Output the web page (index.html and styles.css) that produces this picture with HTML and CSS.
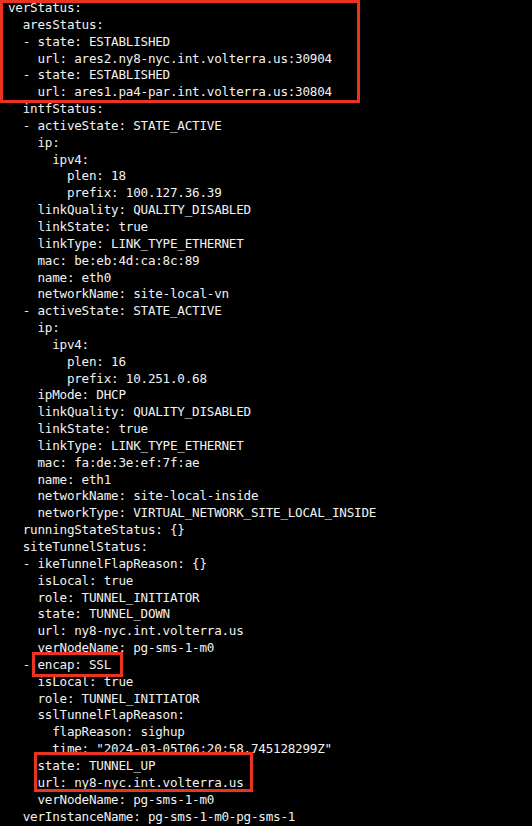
FILE: index.html
```html
<!DOCTYPE html>
<html lang="en">
<head>
<meta charset="utf-8">
<title>verStatus</title>
<link rel="stylesheet" href="styles.css">
</head>
<body>
<div class="terminal">
<pre class="yaml">verStatus:
  aresStatus:
  - state: ESTABLISHED
    url: ares2.ny8-nyc.int.volterra.us:30904
  - state: ESTABLISHED
    url: ares1.pa4-par.int.volterra.us:30804
  intfStatus:
  - activeState: STATE_ACTIVE
    ip:
      ipv4:
        plen: 18
        prefix: 100.127.36.39
    linkQuality: QUALITY_DISABLED
    linkState: true
    linkType: LINK_TYPE_ETHERNET
    mac: be:eb:4d:ca:8c:89
    name: eth0
    networkName: site-local-vn
  - activeState: STATE_ACTIVE
    ip:
      ipv4:
        plen: 16
        prefix: 10.251.0.68
    ipMode: DHCP
    linkQuality: QUALITY_DISABLED
    linkState: true
    linkType: LINK_TYPE_ETHERNET
    mac: fa:de:3e:ef:7f:ae
    name: eth1
    networkName: site-local-inside
    networkType: VIRTUAL_NETWORK_SITE_LOCAL_INSIDE
  runningStateStatus: {}
  siteTunnelStatus:
  - ikeTunnelFlapReason: {}
    isLocal: true
    role: TUNNEL_INITIATOR
    state: TUNNEL_DOWN
    url: ny8-nyc.int.volterra.us
    verNodeName: pg-sms-1-m0
  - encap: SSL
    isLocal: true
    role: TUNNEL_INITIATOR
    sslTunnelFlapReason:
      flapReason: sighup
      time: "2024-03-05T06:20:58.745128299Z"
    state: TUNNEL_UP
    url: ny8-nyc.int.volterra.us
    verNodeName: pg-sms-1-m0
  verInstanceName: pg-sms-1-m0-pg-sms-1</pre>
<div class="mark mark-ares"></div>
<div class="mark mark-encap"></div>
<div class="mark mark-up"></div>
</div>
</body>
</html>
```
FILE: styles.css
```css
html, body {
  margin: 0;
  padding: 0;
  background: #000;
}
.terminal {
  position: relative;
  width: 532px;
  height: 826px;
  background: #000;
  overflow: hidden;
}
.yaml {
  margin: 0;
  padding: 0 0 0 8px;
  font-family: "DejaVu Sans Mono", "Liberation Mono", monospace;
  font-size: 12.6px;
  letter-spacing: -0.22px;
  line-height: 16.85px;
  color: #f2f2f2;
  white-space: pre;
}
.mark {
  position: absolute;
  box-sizing: border-box;
  border: 3px solid #ea3323;
}
.mark-ares {
  left: 0;
  top: 0;
  width: 360px;
  height: 103px;
}
.mark-encap {
  left: 32px;
  top: 652px;
  width: 91px;
  height: 25px;
}
.mark-up {
  left: 34px;
  top: 752px;
  width: 219px;
  height: 40px;
}
```
